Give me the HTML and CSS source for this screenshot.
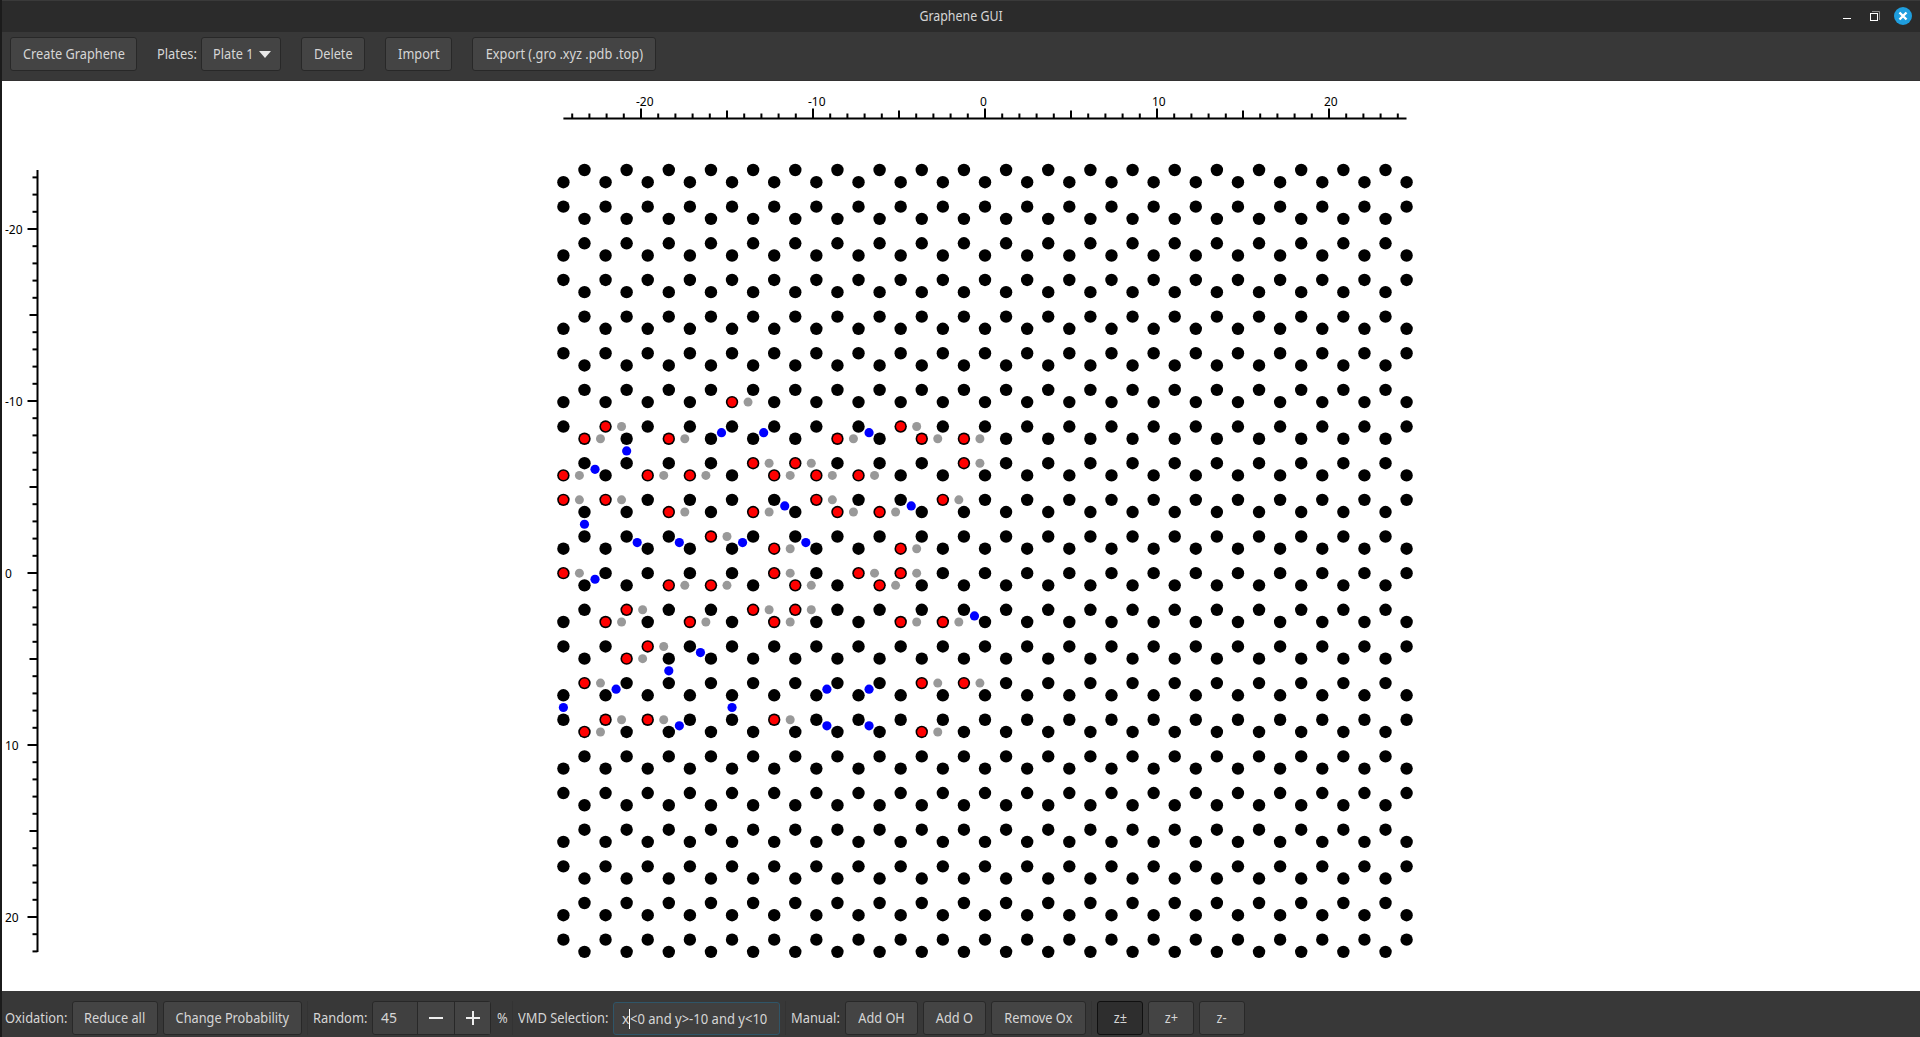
FILE: index.html
```html
<!DOCTYPE html>
<html lang="en">
<head>
<meta charset="utf-8">
<title>Graphene GUI</title>
<link rel="stylesheet" href="styles.css">
</head>
<body>
<div class="window">
  <header class="titlebar">
    <span class="side"></span>
    <h1 class="title">Graphene GUI</h1>
    <span class="side controls">
      <svg width="90" height="30" viewBox="1830 1 90 30">
        <path d="M1843 18.500h8" stroke="#fff"/>
        <path d="M1872 11.500h7.500v8.500" fill="none" stroke="#8c8c8c"/>
        <rect x="1870.500" y="13.500" width="7" height="7" fill="none" stroke="#fff"/>
        <circle cx="1903" cy="16" r="9" fill="#1f9ede"/>
        <path d="M1899.500 12.500l7 7m0-7l-7 7" stroke="#fff" stroke-width="2.400"/>
      </svg>
    </span>
  </header>

  <nav class="toolbar">
    <button class="btn create"><span>Create Graphene</span></button>
    <span class="label plates">Plates:</span>
    <button class="btn combo"><span>Plate 1</span><i class="arrow"></i></button>
    <button class="btn delete"><span>Delete</span></button>
    <button class="btn import"><span>Import</span></button>
    <button class="btn export"><span>Export (.gro .xyz .pdb .top)</span></button>
  </nav>

  <main class="canvas"><svg id="plot" width="1918" height="910" viewBox="2 81 1918 910"></svg></main>

  <footer class="bottombar">
    <span class="label oxidation">Oxidation:</span>
    <button class="btn reduce"><span>Reduce all</span></button>
    <button class="btn change"><span>Change Probability</span></button>
    <i class="sep"></i>
    <span class="label random">Random:</span>
    <div class="spin">
      <span class="value">45</span>
      <span class="step"><svg width="14" height="14"><path d="M0 7h14" stroke="#eee" stroke-width="2"/></svg></span>
      <span class="step last"><svg width="14" height="14"><path d="M0 7h14M7 0v14" stroke="#eee" stroke-width="2"/></svg></span>
    </div>
    <span class="label percent">%</span>
    <i class="sep"></i>
    <span class="label vmd">VMD Selection:</span>
    <div class="entry"><span class="before">x</span><i class="caret"></i><span class="after">&lt;0 and y&gt;-10 and y&lt;10</span></div>
    <i class="sep"></i>
    <span class="label manual">Manual:</span>
    <button class="btn addoh"><span>Add OH</span></button>
    <button class="btn addo"><span>Add O</span></button>
    <button class="btn remove"><span>Remove Ox</span></button>
    <i class="sep"></i>
    <button class="btn z active"><span>z±</span></button>
    <button class="btn z"><span>z+</span></button>
    <button class="btn z"><span>z-</span></button>
  </footer>
</div>
<script src="plot.js"></script>
</body>
</html>
```
FILE: styles.css
```css
* { box-sizing: border-box; }
body { margin: 0; background: #383838; }
.window {
  width: 1920px; height: 1037px; display: flex; flex-direction: column;
  border-left: 2px solid #1b1b1b; overflow: hidden;
  font: 14px/20px "Noto Sans", "Open Sans", sans-serif; color: #d6d6d6;
}
.titlebar {
  height: 32px; flex: none; display: flex; align-items: flex-start; justify-content: space-between;
  background: #2b2b2b; border-top: 1px solid #3a3a3a;
}
.side { width: 90px; height: 30px; }
.side svg { display: block; }
.title { margin: 4px 0 0; font-size: 14px; font-weight: 400; line-height: 22px; white-space: nowrap; transform: scaleX(0.885); }
.toolbar {
  height: 49px; flex: none; display: flex; align-items: flex-start; padding: 5px 0 0 8px;
  background: #383838; border-bottom: 1px solid #333132;
}
.btn {
  height: 34px; flex: none; display: flex; align-items: center; justify-content: center; padding: 0;
  font: inherit; color: inherit; background: #444; border: 1px solid #282828; border-radius: 3px; white-space: nowrap;
}
.btn span { transform: scaleX(0.91); }
.label { flex: none; height: 34px; line-height: 34px; white-space: nowrap; transform: scaleX(0.92); transform-origin: 0 0; }
.create { width: 127px; }
.plates { width: 44px; margin-left: 20px; }
.combo { width: 80px; gap: 3px; }
.arrow { border: 6px solid transparent; border-top: 7px solid #e8e8e8; border-bottom: 0; }
.delete { width: 64px; margin-left: 20px; }
.import { width: 67px; margin-left: 20px; }
.export { width: 184px; margin-left: 20px; }
.canvas { flex: none; height: 910px; background: #fff; }
.canvas svg { display: block; }
.tick-label { font: 12px "Noto Sans", sans-serif; fill: #000; }
.bottombar { flex: 1; display: flex; align-items: flex-start; padding: 10px 0 0 3px; background: #383838; }
.sep { width: 1px; height: 34px; flex: none; margin: 0 5px; background: #333; }
.oxidation { width: 67px; }
.reduce { width: 86px; }
.change { width: 139px; margin-left: 5px; }
.random { width: 59px; }
.spin { width: 119px; height: 34px; flex: none; display: flex; border: 1px solid #282828; border-radius: 3px; background: #404040; }
.value { flex: 1; padding-left: 8px; line-height: 32px; }
.step { width: 37px; display: flex; align-items: center; justify-content: center; border-left: 1px solid #282828; background: #444; }
.last { width: 36px; }
.percent { width: 10px; margin-left: 6px; }
.vmd { width: 95px; }
.entry { width: 167px; height: 33px; margin-top: 1px; flex: none; display: flex; align-items: center; padding-left: 8px; border: 1px solid #2f5568; border-radius: 3px; background: #404040; white-space: nowrap; }
.before { width: 7px; }
.after { transform: scaleX(0.93); transform-origin: 0 0; }
.caret { width: 1px; height: 20px; background: #fff; }
.manual { width: 54px; }
.addoh { width: 73px; }
.addo { width: 63px; margin-left: 5px; }
.remove { width: 95px; margin-left: 5px; }
.z { width: 46px; margin-right: 5px; }
.active { background: #2e2e2e; border-color: #101010; }
```
FILE: plot.js
```js
const plot = document.getElementById("plot");
const X0 = 563.4, DX = 21.08, Y0 = 170, DY = 36.65, BOND = 12.2, UNIT = 17.2;
const ORIGIN = { x: 985, y: 573 };

// Hydroxyl sites: pair of rows -> [columns on the upper row, columns on the lower row]
const hydroxyls = {
  6: [[], [8]], 7: [[2, 16], [1, 5, 13, 17, 19]], 8: [[9, 11, 19], [0, 4, 6, 10, 12, 14]],
  9: [[0, 2, 12, 18], [5, 9, 13, 15]], 10: [[7], [10, 16]], 11: [[0, 10, 14, 16], [5, 7, 11, 15]],
  12: [[3, 9, 11], [2, 6, 10, 16, 18]], 13: [[4], [3]], 14: [[1, 17, 19], []], 15: [[2, 4, 10], [1, 17]]
};
// Epoxy bridges inside a pair of rows, and between one pair and the next
const epoxies = { 7: [7.5, 9.5, 14.5], 8: [1.5], 9: [10.5, 16.5], 10: [3.5, 5.5, 8.5, 11.5], 11: [1.5], 12: [19.5], 13: [6.5], 14: [2.5, 12.5, 14.5], 15: [5.5, 12.5, 14.5] };
const verticalEpoxies = { 7: [3], 9: [1], 13: [5], 14: [0, 8] };

function add(tag, attrs, text) {
  const el = document.createElementNS("http://www.w3.org/2000/svg", tag);
  for (const k in attrs) el.setAttribute(k, attrs[k]);
  if (text !== undefined) el.textContent = text;
  plot.appendChild(el);
}
const dot = (cx, cy, r, fill) => add("circle", { cx, cy, r, fill });
const line = (x1, y1, x2, y2) => add("path", { d: `M${x1} ${y1}L${x2} ${y2}`, stroke: "#000", "stroke-width": 2 });

for (let p = 0; p < 22; p++) {
  for (let row = 0; row < 2; row++) {
    const y = Y0 + DY * p + BOND * row;
    for (let i = (p + row + 1) % 2; i <= 40; i += 2) {
      const x = X0 + DX * i;
      dot(x, y, 6.2, "#000");
      if (hydroxyls[p] && hydroxyls[p][row].includes(i)) {
        dot(x, y, 4.6, "#f00");
        dot(x + 16, y, 4.5, "#999");
      }
    }
  }
}
for (const p in epoxies) for (const i of epoxies[p]) dot(X0 + DX * i, Y0 + DY * p + BOND / 2, 4.6, "#00f");
for (const p in verticalEpoxies) for (const i of verticalEpoxies[p]) dot(X0 + DX * i, Y0 + DY * p + BOND * 2, 4.6, "#00f");

const tickSize = n => n % 10 === 0 ? 10 : n % 5 === 0 ? 8 : 5;
line(563.4, 118.5, 1406.5, 118.5);
for (let n = -24; n <= 24; n++) {
  const x = ORIGIN.x + n * UNIT;
  line(x, 118.5, x, 118.5 - tickSize(n));
  if (n % 10 === 0) add("text", { x: x - 5, y: 106, class: "tick-label" }, n);
}
line(37.5, 170, 37.5, 952);
for (let n = -23; n <= 22; n++) {
  const y = ORIGIN.y + n * UNIT;
  line(37.5, y, 37.5 - tickSize(n), y);
  if (n % 10 === 0) add("text", { x: 5, y: y + 5, class: "tick-label" }, n);
}
```
